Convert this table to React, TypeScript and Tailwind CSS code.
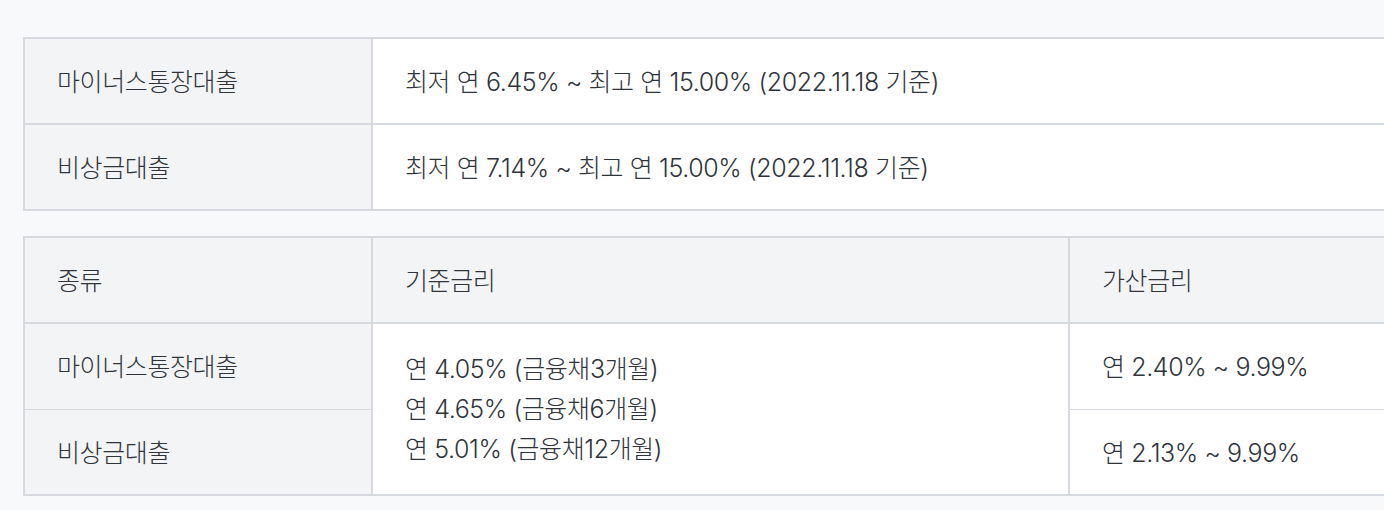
const font = {
  fontFamily: 'Inter, "Noto Sans CJK KR", "Noto Sans", sans-serif',
};

function Cell({
  children,
  className = "",
}: {
  children: React.ReactNode;
  className?: string;
}) {
  return (
    <div
      className={`flex items-center px-8 text-[25px] font-light tracking-[-0.4px] text-[#2f343b] ${className}`}
    >
      {children}
    </div>
  );
}

export default function App() {
  return (
    <div
      className="min-h-[510px] overflow-hidden bg-[#f8f9fb] pl-[23px] pt-[37px]"
      style={font}
    >
      <div className="w-[1420px]">
        {/* 금리 요약 */}
        <div className="grid grid-cols-[348px_1fr] border-2 border-[#d6d9dd] bg-white">
          <Cell className="h-[86px] border-b-2 border-r-2 border-[#d6d9dd] bg-[#f2f4f6] pt-[3px]">
            마이너스통장대출
          </Cell>
          <Cell className="h-[86px] border-b-2 border-[#d6d9dd] pt-[3px]">
            최저 연 6.45% ~ 최고 연 15.00% (2022.11.18 기준)
          </Cell>
          <Cell className="h-[84px] border-r-2 border-[#d6d9dd] bg-[#f2f4f6] pt-[3px]">
            비상금대출
          </Cell>
          <Cell className="h-[84px] pt-[3px]">
            최저 연 7.14% ~ 최고 연 15.00% (2022.11.18 기준)
          </Cell>
        </div>

        {/* 기준금리 / 가산금리 */}
        <div className="mt-[25px] grid grid-cols-[348px_697px_1fr] border-2 border-[#d6d9dd] bg-white">
          <Cell className="h-[86px] border-b-2 border-r-2 border-[#d6d9dd] bg-[#f2f4f6] pt-[3px]">
            종류
          </Cell>
          <Cell className="h-[86px] border-b-2 border-r-2 border-[#d6d9dd] bg-[#f2f4f6] pt-[3px]">
            기준금리
          </Cell>
          <Cell className="h-[86px] border-b-2 border-[#d6d9dd] bg-[#f2f4f6] pt-[3px]">
            가산금리
          </Cell>

          <Cell className="h-[86px] border-b border-r-2 border-[#d6d9dd] bg-[#f2f4f6] pt-[2px]">
            마이너스통장대출
          </Cell>
          <Cell className="row-span-2 border-r-2 border-[#d6d9dd]">
            <div className="leading-[40px]">
              <div>연 4.05% (금융채3개월)</div>
              <div>연 4.65% (금융채6개월)</div>
              <div>연 5.01% (금융채12개월)</div>
            </div>
          </Cell>
          <Cell className="h-[86px] border-b border-[#d6d9dd] pt-[2px]">
            연 2.40% ~ 9.99%
          </Cell>

          <Cell className="h-[84px] border-r-2 border-[#d6d9dd] bg-[#f2f4f6] pt-[3px]">
            비상금대출
          </Cell>
          <Cell className="h-[84px] pt-[3px]">연 2.13% ~ 9.99%</Cell>
        </div>
      </div>
    </div>
  );
}
